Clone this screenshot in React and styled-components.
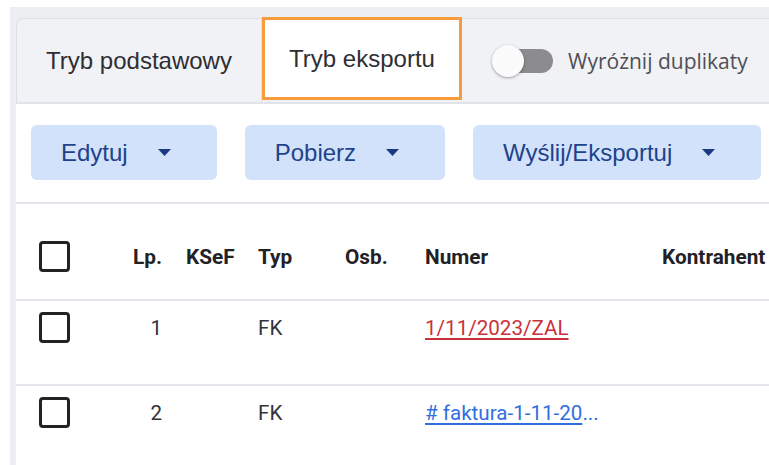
import React, { useState } from 'react';
import styled, { createGlobalStyle } from 'styled-components';

const GlobalStyle = createGlobalStyle`
  html, body {
    margin: 0;
    background: #fff;
    overflow: hidden;
    font-family: 'Liberation Sans', Arial, sans-serif;
  }
`;

const Frame = styled.div`
  box-sizing: border-box;
  margin: 7px 0 0 10px;
  padding: 11px 0 0 6px;
  background: #eceef2;
  height: calc(100vh - 7px);
  overflow: hidden;
`;

const Panel = styled.div`
  background: #fff;
  height: 100%;
`;

const TabBar = styled.div`
  display: flex;
  align-items: stretch;
  height: 83px;
  background: #f1f2f6;
  border-top: 1px solid #dedfe4;
  border-left: 1px solid #dedfe4;
  border-bottom: 2px solid #e2e3e8;
  border-top-left-radius: 8px;
`;

const Tab = styled.div`
  display: flex;
  align-items: center;
  justify-content: center;
  box-sizing: border-box;
  width: ${p => p.$w}px;
  font-size: 24px;
  color: #2e2e34;
  background: ${p => (p.$active ? '#fff' : 'transparent')};
  border-right: ${p => (p.$active ? 'none' : '1px solid #e0e1e6')};
  outline: ${p => (p.$active ? '3px solid #f79b3c' : 'none')};
  outline-offset: -3px;
  margin-top: ${p => (p.$active ? '-2px' : '0')};
  margin-bottom: ${p => (p.$active ? '2px' : '0')};
`;

const ToggleWrap = styled.label`
  display: flex;
  align-items: center;
  gap: 15px;
  margin-left: 28px;
  font-family: 'Open Sans', sans-serif;
  font-size: 21px;
  color: #4f4f54;
  white-space: nowrap;
  cursor: pointer;
`;

const Track = styled.span`
  position: relative;
  display: inline-block;
  width: 53px;
  height: 24px;
  margin-left: 10px;
  border-radius: 12px;
  background: ${p => (p.$on ? '#7aa6ef' : '#8c8c90')};
`;

const Knob = styled.span`
  position: absolute;
  top: -4px;
  left: ${p => (p.$on ? '27px' : '-8px')};
  width: 32px;
  height: 32px;
  border-radius: 50%;
  background: #fbfbfb;
  box-shadow: 0 1px 3px rgba(0, 0, 0, 0.35);
`;

const Toolbar = styled.div`
  display: flex;
  gap: 28px;
  padding: 21px 0 22px 15px;
  border-bottom: 2px solid #e4e5ea;
`;

const MenuButton = styled.button`
  display: flex;
  align-items: center;
  gap: 30px;
  height: 55px;
  padding: 0 46px 0 30px;
  border: none;
  border-radius: 6px;
  background: #d2e2fb;
  color: #1e428c;
  font-family: 'Liberation Sans', Arial, sans-serif;
  font-size: 24px;
  white-space: nowrap;
  cursor: pointer;
`;

const Caret = () => (
  <svg width="13" height="7" viewBox="0 0 13 7">
    <path d="M0 0h13L6.5 7z" fill="#1b3880" />
  </svg>
);

const Row = styled.div`
  display: grid;
  grid-template-columns: 98px 48px 96px 87px 80px 237px 1fr;
  align-items: ${p => (p.$head ? 'center' : 'start')};
  min-height: ${p => (p.$head ? '97px' : '85px')};
  box-sizing: border-box;
  padding-top: ${p => (p.$head ? '10px' : '11px')};
  border-bottom: 2px solid #e4e5ea;
  font-family: Roboto, sans-serif;
  font-size: ${p => (p.$head ? '20.8px' : '20.6px')};
  font-weight: ${p => (p.$head ? 700 : 400)};
  color: ${p => (p.$head ? '#222226' : '#333338')};
  &:last-child {
    border-bottom: none;
  }
`;

const Cell = styled.div`
  display: flex;
  align-items: center;
  min-height: 31px;
  white-space: nowrap;
  justify-content: ${p => (p.$right ? 'flex-end' : 'flex-start')};
  padding-left: ${p => p.$pl || 0}px;
`;

const Check = styled.span`
  display: inline-block;
  box-sizing: border-box;
  width: 31px;
  height: 31px;
  margin-left: 23px;
  border: 3px solid #232326;
  border-radius: 4px;
`;

const DocLink = styled.a`
  color: ${p => (p.$alert ? '#c9313b' : '#2f6fe0')};
  text-decoration: underline;
  text-underline-offset: 3px;
`;

const More = styled.span`
  color: #2f6fe0;
`;

const rows = [
  { lp: 1, typ: 'FK', numer: '1/11/2023/ZAL', alert: true },
  { lp: 2, typ: 'FK', numer: '# faktura-1-11-20', cut: true },
];

export default function App() {
  const [dupes, setDupes] = useState(false);

  return (
    <>
      <GlobalStyle />
      <Frame>
        <TabBar>
          <Tab $w={245}>Tryb podstawowy</Tab>
          <Tab $w={200} $active>Tryb eksportu</Tab>
          <ToggleWrap onClick={() => setDupes(v => !v)}>
            <Track $on={dupes}>
              <Knob $on={dupes} />
            </Track>
            Wyróżnij duplikaty
          </ToggleWrap>
        </TabBar>
        <Panel>
          <Toolbar>
            <MenuButton>Edytuj <Caret /></MenuButton>
            <MenuButton>Pobierz <Caret /></MenuButton>
            <MenuButton>Wyślij/Eksportuj <Caret /></MenuButton>
          </Toolbar>
          <Row $head>
            <Cell><Check /></Cell>
            <Cell $right>Lp.</Cell>
            <Cell $pl={24}>KSeF</Cell>
            <Cell>Typ</Cell>
            <Cell>Osb.</Cell>
            <Cell>Numer</Cell>
            <Cell>Kontrahent</Cell>
          </Row>
          {rows.map(r => (
            <Row key={r.lp}>
              <Cell><Check /></Cell>
              <Cell $right>{r.lp}</Cell>
              <Cell $pl={24} />
              <Cell>{r.typ}</Cell>
              <Cell />
              <Cell>
                <DocLink $alert={r.alert}>{r.numer}</DocLink>
                {r.cut && <More>...</More>}
              </Cell>
              <Cell />
            </Row>
          ))}
        </Panel>
      </Frame>
    </>
  );
}
